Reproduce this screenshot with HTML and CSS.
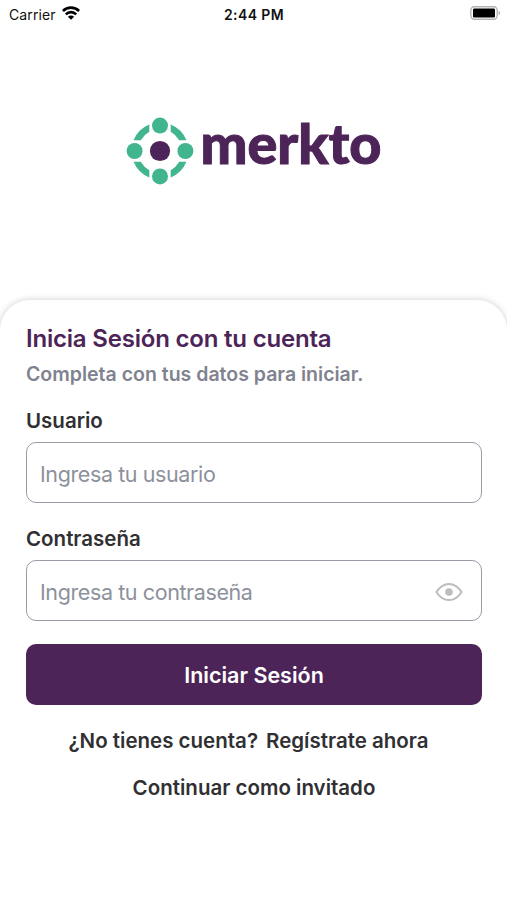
FILE: index.html
```
<!DOCTYPE html>
<html lang="es">
<head>
<meta charset="utf-8">
<meta name="viewport" content="width=device-width, initial-scale=1">
<title>merkto</title>
<link rel="stylesheet" href="styles.css">
</head>
<body>
<div class="screen">
  <header class="status">
    <div class="status-left">
      <span class="carrier">Carrier</span>
      <svg class="wifi" width="18" height="14" viewBox="0 0 18 14" fill="none" stroke="#000" stroke-width="2.6">
        <path d="M0.9 5A11.5 11.5 0 0 1 17.1 5"/>
        <path d="M3.8 8.3A7.4 7.4 0 0 1 14.2 8.3"/>
        <path d="M9 13.8L5.9 10.7A4.3 4.3 0 0 1 12.1 10.7Z" fill="#000" stroke="none"/>
      </svg>
    </div>
    <span class="clock">2:44 PM</span>
    <svg class="battery" width="31" height="14" viewBox="0 0 31 14">
      <rect x="0.8" y="0.8" width="26.4" height="12.4" rx="3.6" fill="#fff" stroke="#b5b5b5" stroke-width="1.4"/>
      <rect x="3" y="2.6" width="22" height="9" rx="1.4" fill="#000"/>
      <path d="M28.6 4.7Q30.3 5.4 30.3 7T28.6 9.3Z" fill="#b5b5b5"/>
    </svg>
  </header>
  <div class="brand">
    <svg width="270" height="104" viewBox="0 -16 270 104" role="img" aria-label="merkto">
      <g transform="translate(36 36)">
        <g fill="#40b58e">
          <path id="arc" d="M-10.7-26.4A28.5 28.5 0 0 0-26.4-10.7H-19.2A22 22 0 0 1-10.7-19.2Z"/>
          <use href="#arc" transform="rotate(90)"/>
          <use href="#arc" transform="rotate(180)"/>
          <use href="#arc" transform="rotate(270)"/>
          <circle cy="-25.4" r="8"/><circle cx="25.4" r="8"/>
          <circle cy="25.4" r="8"/><circle cx="-25.4" r="8"/>
        </g>
        <circle r="10.1" fill="#4d2458"/>
      </g>
      <text class="wordmark" x="76.5" y="49" textLength="181" lengthAdjust="spacingAndGlyphs">merkto</text>
    </svg>
  </div>
  <main class="sheet">
    <h1 class="title">Inicia Sesión con tu cuenta</h1>
    <p class="subtitle">Completa con tus datos para iniciar.</p>
    <label class="label" for="user">Usuario</label>
    <div class="field"><input id="user" type="text" placeholder="Ingresa tu usuario"></div>
    <label class="label label-pass" for="pass">Contraseña</label>
    <div class="field">
      <input id="pass" type="password" placeholder="Ingresa tu contraseña">
      <svg class="eye" width="28" height="20" viewBox="0 0 28 20" fill="none" stroke="#bdbdbd" stroke-width="2">
        <path d="M1.4 10Q6.5 1.9 14 1.9T26.6 10Q21.5 18.1 14 18.1T1.4 10Z" stroke-linejoin="round"/>
        <circle cx="14" cy="10" r="3.8" fill="#bdbdbd" stroke="none"/>
      </svg>
    </div>
    <button class="submit" type="button">Iniciar Sesión</button>
    <p class="register"><span>¿No tienes cuenta?</span><span>Regístrate ahora</span></p>
    <p class="guest">Continuar como invitado</p>
  </main>
</div>
</body>
</html>
```
FILE: styles.css
```
* { box-sizing: border-box; }
body, h1, p { margin: 0; }
body { background: #fff; font-family: Inter, "Liberation Sans", sans-serif; color: #303033; }
.screen { height: 900px; overflow: hidden; display: flex; flex-direction: column; }
.status { height: 28px; display: grid; grid-template-columns: 1fr auto 1fr; align-items: center; padding: 0 6px 0 9px; color: #111; }
.status-left { display: flex; align-items: center; gap: 6px; }
.carrier { font-size: 14px; letter-spacing: 0.1px; }
.wifi { display: block; margin-top: -2px; }
.clock { margin-right: 2px; font-size: 14px; font-weight: 600; letter-spacing: 0.4px; }
.battery { justify-self: end; margin-top: -2px; }
.brand { height: 272px; padding: 71px 0 0 124px; }
.brand svg { display: block; }
.wordmark { font-family: Lato, sans-serif; font-weight: 900; font-size: 56px; fill: #4d2458; stroke: #4d2458; stroke-width: 1px; }
.sheet { flex: 1; padding: 24px 25px 0 26px; border-radius: 30px 30px 0 0; background: #fff; box-shadow: 0 0 7px rgba(0, 0, 0, 0.2); }
.title { height: 29px; line-height: 29px; font-size: 24px; font-weight: 600; letter-spacing: -0.2px; color: #4d2458; white-space: nowrap; }
.subtitle { height: 24px; margin-top: 9px; line-height: 24px; font-size: 19.5px; font-weight: 600; color: #80838f; white-space: nowrap; }
.label { display: block; height: 24px; margin-top: 23px; line-height: 24px; font-size: 20.5px; font-weight: 600; }
.label-pass { margin-top: 24px; }
.field { display: flex; align-items: center; height: 61px; margin-top: 9px; padding: 0 18px 0 13px; border: 1.5px solid #9a9ca5; border-radius: 10px; }
.eye { margin-top: 2px; }
.field input { flex: 1; min-width: 0; padding: 2px 0 0; border: 0; outline: 0; background: none; font: 400 21.5px Inter, sans-serif; letter-spacing: -0.4px; }
.field input::placeholder { color: #8c919c; opacity: 1; }
.submit { display: block; width: 100%; height: 61px; margin-top: 23px; padding: 0; border: 0; border-radius: 10px; background: #4d2458; color: #fff; font: 600 21.5px Inter, sans-serif; }
.register { display: flex; justify-content: center; gap: 8px; height: 24px; margin-top: 24px; padding-right: 11px; line-height: 24px; font-size: 20.5px; font-weight: 600; white-space: nowrap; }
.guest { height: 24px; margin-top: 23px; line-height: 24px; text-align: center; font-size: 20.5px; font-weight: 600; }
```
